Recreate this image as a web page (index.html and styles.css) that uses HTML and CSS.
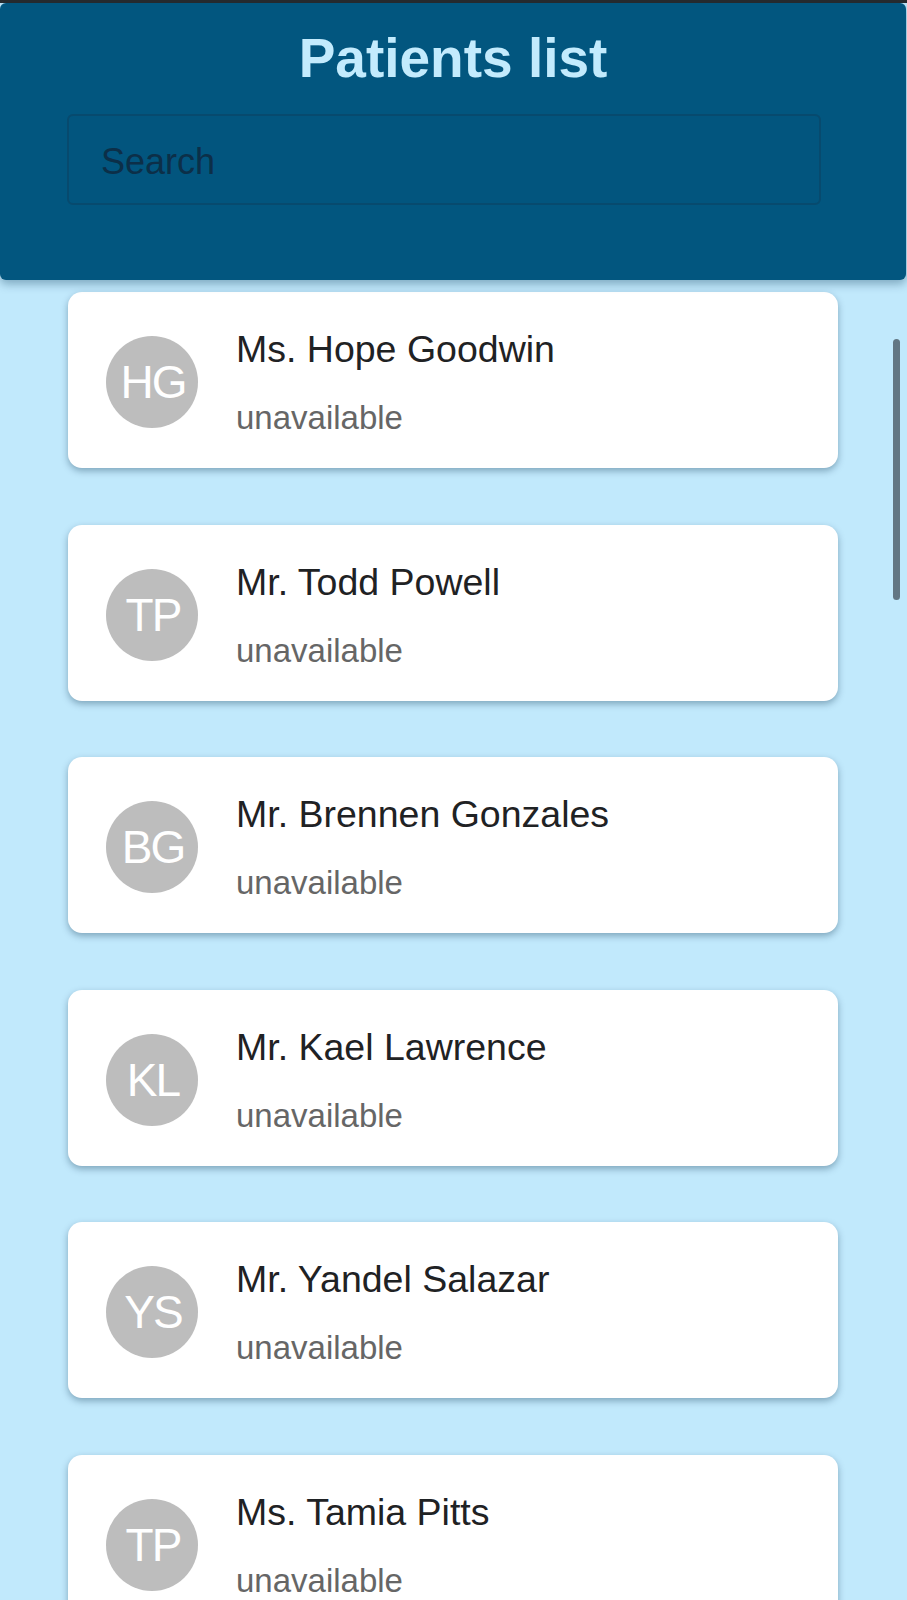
FILE: index.html
```html
<!DOCTYPE html>
<html lang="en">
<head>
<meta charset="utf-8">
<title>Patients list</title>
<link rel="stylesheet" href="styles.css">
</head>
<body>
<div class="app">
  <div class="status-edge"></div>
  <header class="header">
    <h1 class="title">Patients list</h1>
    <input class="search" type="text" placeholder="Search">
  </header>
  <main class="list">
    <div class="card">
      <div class="avatar">HG</div>
      <div class="info"><div class="name">Ms. Hope Goodwin</div><div class="status">unavailable</div></div>
    </div>
    <div class="card">
      <div class="avatar">TP</div>
      <div class="info"><div class="name">Mr. Todd Powell</div><div class="status">unavailable</div></div>
    </div>
    <div class="card">
      <div class="avatar">BG</div>
      <div class="info"><div class="name">Mr. Brennen Gonzales</div><div class="status">unavailable</div></div>
    </div>
    <div class="card">
      <div class="avatar">KL</div>
      <div class="info"><div class="name">Mr. Kael Lawrence</div><div class="status">unavailable</div></div>
    </div>
    <div class="card">
      <div class="avatar">YS</div>
      <div class="info"><div class="name">Mr. Yandel Salazar</div><div class="status">unavailable</div></div>
    </div>
    <div class="card">
      <div class="avatar">TP</div>
      <div class="info"><div class="name">Ms. Tamia Pitts</div><div class="status">unavailable</div></div>
    </div>
  </main>
  <div class="scroll-thumb"></div>
</div>
</body>
</html>
```

FILE: styles.css
```css
html, body {
  margin: 0;
  padding: 0;
  height: 100%;
  overflow: hidden;
  background: #c1e9fc;
}

.app {
  position: relative;
  height: 100vh;
  display: flex;
  flex-direction: column;
  overflow: hidden;
  font-family: "Liberation Sans", Arial, sans-serif;
}

.status-edge {
  height: 3px;
  background: #272b2e;
  flex: none;
}

.header {
  flex: none;
  margin-right: 1px;
  background: #02567f;
  border-radius: 6px;
  padding: 23px 0 75px;
  box-shadow: 0 4px 10px rgba(0, 50, 80, 0.35);
  position: relative;
  z-index: 1;
}

.title {
  margin: 0;
  text-align: center;
  font-size: 55px;
  line-height: 64px;
  font-weight: bold;
  color: #c3ebfd;
}

.search {
  display: block;
  box-sizing: border-box;
  margin: 24px 0 0 67px;
  width: 754px;
  height: 91px;
  padding: 4px 32px 0;
  background: #02557e;
  border: 2px solid #074a6e;
  border-radius: 6px;
  font-family: "Liberation Sans", Arial, sans-serif;
  font-size: 36px;
  color: #0c2f48;
  outline: none;
}

.search::placeholder {
  color: #0c2f48;
}

.list {
  flex: 1;
  display: flex;
  flex-direction: column;
  gap: 56.6px;
  padding: 12px 0 0 68px;
}

.card {
  flex: none;
  box-sizing: border-box;
  width: 770px;
  height: 176px;
  background: #ffffff;
  border-radius: 14px;
  box-shadow: 0 3px 7px rgba(0, 40, 70, 0.35);
  display: flex;
  align-items: flex-start;
  gap: 38px;
  padding: 35px 38px 31px;
}

.avatar {
  align-self: center;
  flex: none;
  width: 92px;
  height: 92px;
  border-radius: 50%;
  background: #bdbdbd;
  color: #ffffff;
  font-size: 46px;
  line-height: 92px;
  letter-spacing: -2px;
  text-indent: 2px;
  text-align: center;
}

.info {
  display: flex;
  flex-direction: column;
}

.name {
  font-size: 37.5px;
  line-height: 44px;
  color: #1f2224;
}

.status {
  margin-top: 28px;
  font-size: 33px;
  line-height: 38px;
  color: #666666;
}

.scroll-thumb {
  position: absolute;
  left: 893px;
  top: 339px;
  width: 7px;
  height: 261px;
  border-radius: 4px;
  background: #627683;
}
```
